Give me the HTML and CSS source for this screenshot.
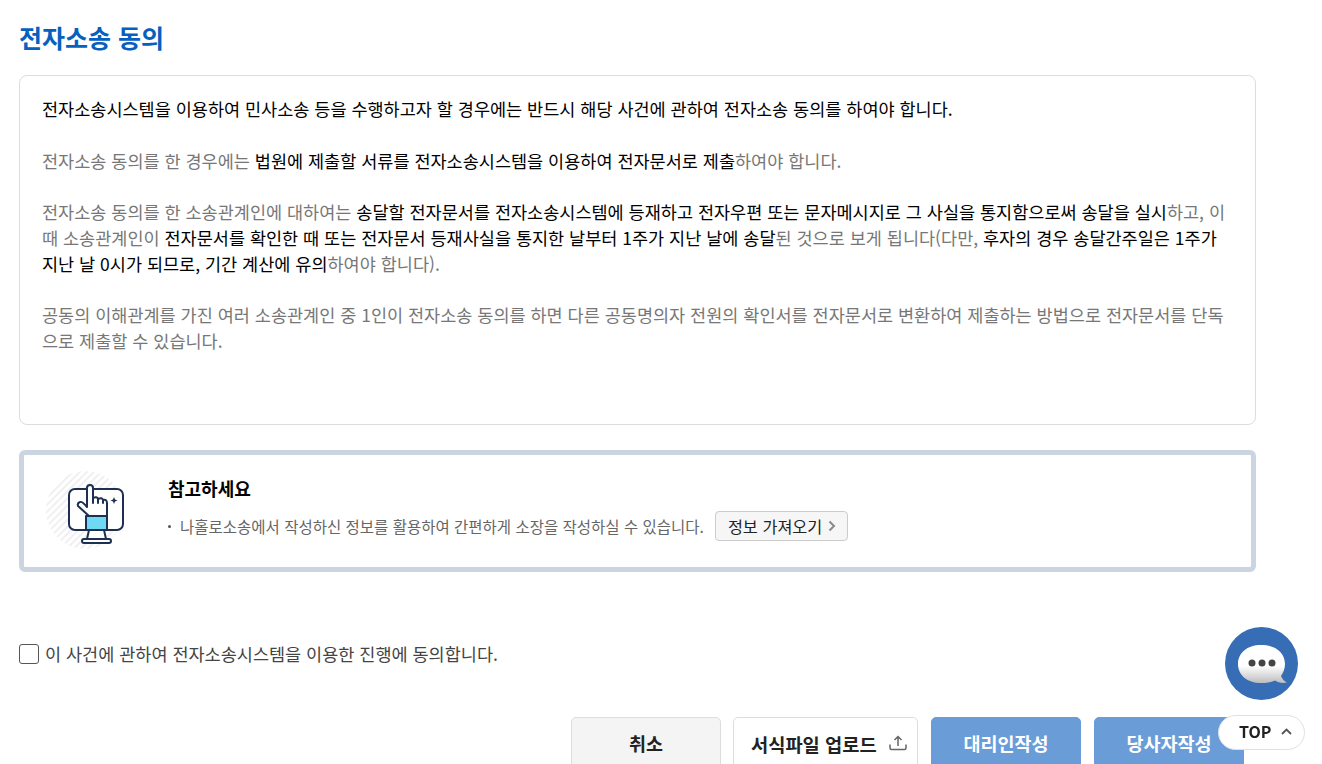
FILE: index.html
```html
<!DOCTYPE html>
<html lang="ko">
<head>
  <meta charset="UTF-8" />
  <title>전자소송 동의</title>
  <link rel="stylesheet" href="styles.css">
</head>
<body>
  <div class="container">
    <h2 class="page-title">전자소송 동의</h2>

    <div class="terms-box">
      <p class="strong">전자소송시스템을 이용하여 민사소송 등을 수행하고자 할 경우에는 반드시 해당 사건에 관하여 전자소송 동의를 하여야 합니다.</p>
      <p>전자소송 동의를 한 경우에는 <b>법원에 제출할 서류를 전자소송시스템을 이용하여 전자문서로 제출</b>하여야 합니다.</p>
      <p>전자소송 동의를 한 소송관계인에 대하여는 <b>송달할 전자문서를 전자소송시스템에 등재하고 전자우편 또는 문자메시지로 그 사실을 통지함으로써 송달을 실시</b>하고, 이때 소송관계인이 <b>전자문서를 확인한 때 또는 전자문서 등재사실을 통지한 날부터 1주가 지난 날에 송달</b>된 것으로 보게 됩니다(다만, <b>후자의 경우 송달간주일은 1주가 지난 날 0시가 되므로, 기간 계산에 유의</b>하여야 합니다).</p>
      <p>공동의 이해관계를 가진 여러 소송관계인 중 1인이 전자소송 동의를 하면 다른 공동명의자 전원의 확인서를 전자문서로 변환하여 제출하는 방법으로 전자문서를 단독으로 제출할 수 있습니다.</p>
    </div>

    <div class="notice-box">
      <svg class="notice-icon" width="80" height="80" viewBox="0 0 80 80">
        <defs>
          <pattern id="hatch" width="5" height="5" patternUnits="userSpaceOnUse" patternTransform="rotate(-45)">
            <rect width="5" height="2" fill="#f0f0f2"/>
          </pattern>
        </defs>
        <circle cx="40" cy="40" r="39" fill="url(#hatch)"/>
        <g stroke="#1f2f52" stroke-width="2" stroke-linejoin="round" stroke-linecap="round">
          <rect x="24" y="19" width="54" height="41" rx="6" fill="#fff"/>
          <path d="M44 60 L42 69 H61 L59 60" fill="#fff"/>
          <rect x="37" y="69" width="29" height="4" rx="2" fill="#fff"/>
          <rect x="41" y="46" width="21" height="14" fill="#6fd8f2"/>
          <path d="M44 46 L33 36 Q32 33 35 32 Q37 31 42 37 V18 Q42 15 45 15 Q48 15 48 18 V28 Q52 26 53 29 Q57 27 58 30 Q62 29 62 33 V46 Z" fill="#fff"/>
          <path d="M53 29 V33 M58 30 V33 M48 28 V33" fill="none"/>
        </g>
        <path d="M69 27 L70 29.500 L72.500 30.500 L70 31.500 L69 34 L68 31.500 L65.500 30.500 L68 29.500 Z" fill="#1f2f52"/>
      </svg>
      <div class="notice-body">
        <h4 class="notice-title">참고하세요</h4>
        <div class="notice-row">
          <span class="notice-dot"></span>
          <span class="notice-text">나홀로소송에서 작성하신 정보를 활용하여 간편하게 소장을 작성하실 수 있습니다.</span>
          <button class="info-btn">정보 가져오기
            <svg width="8" height="12" viewBox="0 0 8 12"><path d="M1.500 1.500 L6 6 L1.500 10.500" fill="none" stroke="#8a8a8a" stroke-width="2"/></svg>
          </button>
        </div>
      </div>
    </div>

    <label class="agree-row">
      <input type="checkbox" class="agree-check">
      <span>이 사건에 관하여 전자소송시스템을 이용한 진행에 동의합니다.</span>
    </label>

    <div class="footer-buttons">
      <button class="btn btn-gray">취소</button>
      <button class="btn btn-upload">서식파일 업로드
        <svg width="18" height="16" viewBox="0 0 18 16"><path d="M9 11 V2 M5.500 5 L9 1.500 L12.500 5 M1 9.500 V13 Q1 14.500 2.500 14.500 H15.500 Q17 14.500 17 13 V9.500" fill="none" stroke="#666" stroke-width="1.500"/></svg>
      </button>
      <button class="btn btn-blue">대리인작성</button>
      <button class="btn btn-blue">당사자작성</button>
    </div>
  </div>

  <a class="chat-btn" href="#">
    <svg width="73" height="73" viewBox="0 0 73 73">
      <defs>
        <linearGradient id="bubble" x1="0" y1="0" x2="0" y2="1">
          <stop offset="0.55" stop-color="#ffffff"/>
          <stop offset="1" stop-color="#bdbdbd"/>
        </linearGradient>
      </defs>
      <circle cx="36.500" cy="36.500" r="36.500" fill="#366db4"/>
      <path d="M36 18 C51 18 60 26 60 37 C60 42 58 46 56 49 C57 52 59 54 62 55.500 C57 56.500 53 55.500 50 53.500 C46 55.500 41 56 36 56 C22 56 13 48 13 37 C13 26 22 18 36 18 Z" fill="url(#bubble)"/>
      <circle cx="27" cy="36" r="3.500" fill="#444"/>
      <circle cx="37" cy="36" r="3.500" fill="#444"/>
      <circle cx="47" cy="36" r="3.500" fill="#444"/>
    </svg>
  </a>
  <a class="top-btn" href="#">TOP
    <svg width="11" height="7" viewBox="0 0 11 7"><path d="M1 6 L5.500 1.500 L10 6" fill="none" stroke="#555" stroke-width="1.800"/></svg>
  </a>
</body>
</html>
```

FILE: styles.css
```css
html, body {
  height: 100%;
  overflow: hidden;
}

body {
  margin: 0;
  background: #fff;
  color: #000;
  font-family: "Noto Sans CJK KR", "Noto Sans", sans-serif;
}

.container {
  width: 1237px;
  margin-left: 19px;
}

.page-title {
  margin: 0;
  padding-top: 19px;
  height: 75px;
  box-sizing: border-box;
  font-size: 25px;
  line-height: 36px;
  font-weight: 700;
  color: #0560c0;
}

.terms-box {
  box-sizing: border-box;
  height: 350px;
  padding: 20.4px 22px;
  border: 1px solid #dddddd;
  border-radius: 8px;
  font-size: 17.5px;
  line-height: 25.7px;
  color: #777;
}

.terms-box p {
  margin: 0 0 25.7px;
}

.terms-box b, .terms-box .strong {
  font-weight: 400;
  color: #000;
}

.notice-box {
  box-sizing: border-box;
  display: flex;
  height: 122px;
  margin-top: 25px;
  padding: 15px 0 0 21px;
  border: 5px solid #cbd4e1;
  border-radius: 6px;
}

.notice-icon {
  flex: none;
}

.notice-body {
  margin-left: 43px;
}

.notice-title {
  margin: 0;
  padding-top: 5px;
  font-size: 18px;
  line-height: 26px;
  font-weight: 700;
}

.notice-row {
  display: flex;
  align-items: center;
  margin-top: 10px;
  font-size: 15.5px;
  color: #666;
}

.notice-dot {
  width: 3px;
  height: 3px;
  margin-right: 9px;
  background: #555;
  border-radius: 50%;
}

.info-btn {
  display: flex;
  align-items: center;
  gap: 6px;
  height: 30px;
  margin-left: 11px;
  padding: 0 0 0 12px;
  width: 133px;
  background: #f6f6f6;
  border: 1px solid #cccccc;
  border-radius: 4px;
  font-family: inherit;
  font-size: 16.3px;
  color: #222;
}

.agree-row {
  display: flex;
  align-items: center;
  gap: 6px;
  margin-top: 71px;
  font-size: 17.5px;
  line-height: 22px;
  color: #444;
}

.agree-check {
  appearance: none;
  width: 20px;
  height: 20px;
  margin: 0;
  background: #fff;
  border: 1px solid #555;
  border-radius: 3px;
}

.footer-buttons {
  display: flex;
  justify-content: flex-end;
  margin-top: 52px;
  padding-right: 12px;
}

.btn {
  display: flex;
  align-items: center;
  justify-content: center;
  gap: 12px;
  flex: none;
  width: 150px;
  height: 52px;
  margin-left: 13px;
  border-radius: 5px;
  border: 1px solid #dddddd;
  background: #fff;
  font-family: inherit;
  font-size: 18.5px;
  font-weight: 700;
  color: #222;
}

.btn-gray {
  background: #f4f4f4;
}

.btn-upload {
  justify-content: flex-start;
  width: 185px;
  margin-left: 12px;
  padding: 0 0 0 17px;
  font-size: 18.7px;
}

.btn-blue {
  border-color: #6a9cd8;
  background: #6a9cd8;
  color: #fff;
}

.chat-btn {
  position: fixed;
  left: 1225px;
  top: 627px;
  width: 73px;
  height: 73px;
}

.top-btn {
  position: fixed;
  left: 1218px;
  top: 715px;
  box-sizing: border-box;
  display: flex;
  align-items: center;
  justify-content: flex-start;
  gap: 9px;
  width: 87px;
  height: 35px;
  padding: 0 0 3px 20px;
  background: #fff;
  border: 1px solid #dfdfe8;
  border-radius: 18px;
  font-size: 16px;
  font-weight: 700;
  color: #222;
  text-decoration: none;
}
```
